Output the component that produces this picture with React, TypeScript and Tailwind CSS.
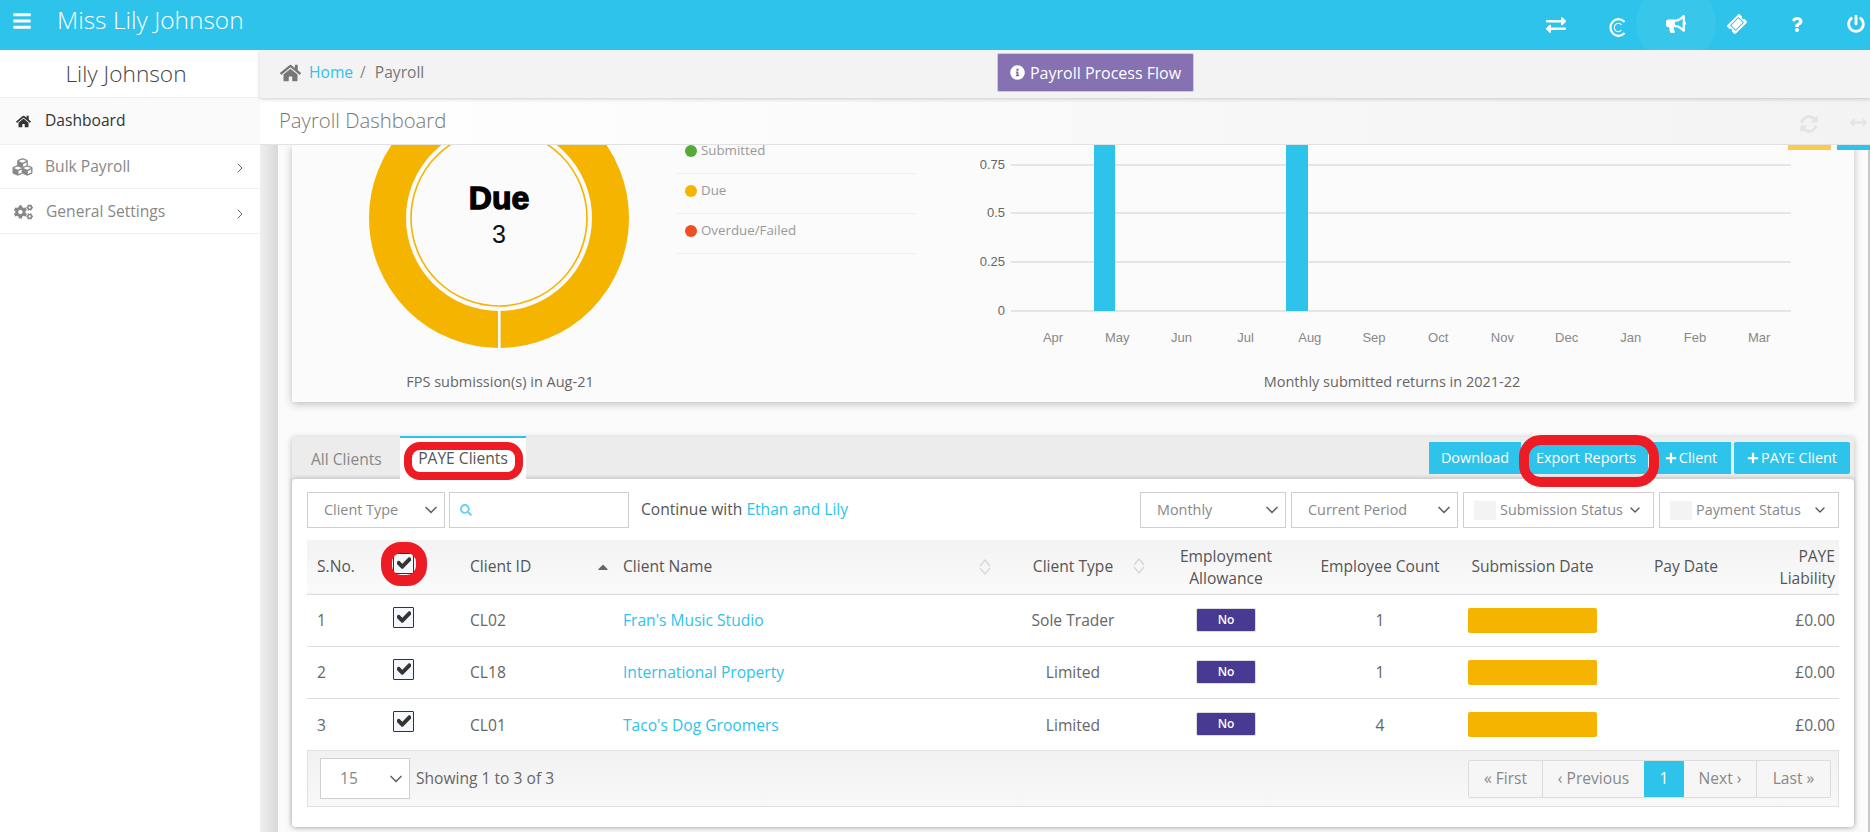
import React from 'react';
import { ChevronDown, ChevronRight } from 'lucide-react';
import {
  FaBars, FaExchangeAlt, FaBullhorn, FaTicketAlt, FaQuestion, FaPowerOff, FaHome, FaCubes, FaCogs,
  FaInfoCircle, FaSyncAlt, FaArrowsAltH, FaSearch, FaPlus, FaCheck, FaCaretUp,
} from 'react-icons/fa';

const months = ['Apr', 'May', 'Jun', 'Jul', 'Aug', 'Sep', 'Oct', 'Nov', 'Dec', 'Jan', 'Feb', 'Mar'];

const clients = [
  { no: 1, id: 'CL02', name: "Fran's Music Studio", type: 'Sole Trader', count: 1 },
  { no: 2, id: 'CL18', name: 'International Property', type: 'Limited', count: 1 },
  { no: 3, id: 'CL01', name: "Taco's Dog Groomers", type: 'Limited', count: 4 },
];

const legend = [
  { label: 'Submitted', color: 'bg-[#56aa3c]', row: 'h-[29px]' },
  { label: 'Due', color: 'bg-[#f5b400]', row: 'h-[40px] pt-[11px]' },
  { label: 'Overdue/Failed', color: 'bg-[#f04e23]', row: 'h-[40px] pt-[11px]' },
];

const CopyIcon = () => (
  <svg width="18" height="19" viewBox="0 0 18 19" fill="none" stroke="white">
    <path d="M16.5 4A8 8.4 0 1 0 16.5 15" strokeWidth="2.2" />
    <path d="M13.5 7A4 4.2 0 1 0 13.5 12" strokeWidth="1.1" />
  </svg>
);

const SortArrows = () => (
  <svg width="12" height="16" viewBox="0 0 12 16" fill="none" stroke="#d5d5d5" strokeWidth="1.2">
    <polyline points="1,7 6,1 11,7" />
    <polyline points="1,9 6,15 11,9" />
  </svg>
);

const Checkbox = () => (
  <span className="flex h-[21px] w-[21px] -translate-y-[3px] items-start justify-center rounded-[1px] border border-[#333] bg-[#f4f7fb] pt-[2px] text-[14px] text-[#333]">
    <FaCheck className="[stroke-width:40px]" />
  </span>
);

const Select = ({ label, className }: { label: string; className: string }) => (
  <div className={`flex h-9 items-center justify-between border border-[#cfcfcf] bg-white pl-[16px] pr-[3px] text-[14.4px] text-[#888] ${className}`}>
    <span>{label}</span>
    <ChevronDown size={20} className="text-[#666]" />
  </div>
);

const MultiSelect = ({ label, className }: { label: string; className: string }) => (
  <div className={`flex h-9 items-center border border-[#cfcfcf] bg-white pl-[10px] pr-[10px] text-[14.4px] text-[#888] ${className}`}>
    <span className="mr-[4px] h-[19px] w-[22px] bg-[#f3f3f3]" />
    <span className="flex-1 whitespace-nowrap">{label}</span>
    <ChevronDown size={16} className="text-[#555]" />
  </div>
);

const Donut = () => (
  <svg className="absolute left-[61.5px] top-[-72px]" width="290" height="290" viewBox="0 0 290 290">
    <circle cx="145" cy="145" r="111.5" fill="none" stroke="#f5b400" strokeWidth="37" />
    <circle cx="145" cy="145" r="88" fill="#fbfbfb" stroke="#f5b400" strokeWidth="1.6" />
    <rect x="144" y="236" width="2.6" height="42" fill="#fbfbfb" />
    <text x="145" y="136" textAnchor="middle" fontFamily="'Liberation Sans', sans-serif" fontWeight="700" fontSize="32" stroke="black" strokeWidth="1.3" fill="black">Due</text>
    <text x="145" y="170" textAnchor="middle" fontFamily="'Liberation Sans', sans-serif" fontSize="25" fill="#111">3</text>
  </svg>
);

const MonthChart = () => {
  const ticks = [
    { label: '0.75', y: 20 },
    { label: '0.5', y: 68 },
    { label: '0.25', y: 117 },
    { label: '0', y: 166 },
  ];
  return (
    <svg className="absolute left-[400px] top-0" width="1140" height="210" viewBox="0 0 1140 210">
      {ticks.map((t) => (
        <g key={t.label}>
          <line x1="319" x2="1099" y1={t.y} y2={t.y} stroke="#cfcfcf" />
          <text x="313" y={t.y + 4} textAnchor="end" fontFamily="'Liberation Sans', sans-serif" fontSize="13" fill="#666">{t.label}</text>
        </g>
      ))}
      <rect x="402" y="0" width="21" height="166" fill="#2dc3ea" />
      <rect x="594" y="0" width="22" height="166" fill="#2dc3ea" />
      {months.map((m, i) => (
        <text key={m} x={361 + i * 64.2} y="197" textAnchor="middle" fontFamily="'Liberation Sans', sans-serif" fontSize="13" fill="#888">{m}</text>
      ))}
    </svg>
  );
};

export default function App() {
  return (
    <div className="flex h-[832px] w-[1870px] flex-col overflow-hidden bg-white font-['Open_Sans',sans-serif] text-[15.6px] text-[#555]">
      <header className="relative z-30 flex h-[50px] shrink-0 items-center bg-[#2dc3ea] text-white">
        <FaBars className="ml-[12px] -mt-[8px] h-[20px] w-[20px]" />
        <span className="ml-[25px] -mt-[10px] text-[24.5px] font-light">Miss Lily Johnson</span>
        <FaExchangeAlt className="absolute left-[1546px] top-[15px] h-[20px] w-[20px]" />
        <span className="absolute left-[1608px] top-[18px]"><CopyIcon /></span>
        <span className="absolute left-[1636px] top-[-17px] h-[80px] w-[80px] rounded-full bg-white/[0.06]" />
        <FaBullhorn className="absolute left-[1666px] top-[14px] h-[20px] w-[20px]" />
        <FaTicketAlt className="absolute left-[1728px] top-[15px] h-[18px] w-[18px] -rotate-45" />
        <FaQuestion className="absolute left-[1791px] top-[17px] h-[15px] w-[12px]" />
        <FaPowerOff className="absolute left-[1847px] top-[15px] h-[18px] w-[18px]" />
      </header>
      <div className="flex min-h-0 flex-1">
        <aside className="flex w-[260px] shrink-0 flex-col bg-white">
          <div className="flex h-[48px] items-center justify-center border-b border-[#f0f0f0] pr-[8px] pt-[2px] text-[22.7px] font-light text-[#444]">Lily Johnson</div>
          <div className="flex h-[47px] items-center border-b border-[#f0f0f0] bg-[#fafafa] pl-[16px] text-[#333]">
            <FaHome className="mr-[14px] h-[15px] w-[15px]" />
            <span>Dashboard</span>
          </div>
          <div className="flex h-[44px] items-center border-b border-[#f0f0f0] pl-[12px] pr-[12px] text-[#888]">
            <FaCubes className="mr-[12px] h-[20px] w-[21px]" />
            <span>Bulk Payroll</span>
            <ChevronRight size={16} strokeWidth={1.5} className="ml-auto mt-[3px] text-[#666]" />
          </div>
          <div className="flex h-[45px] items-center border-b border-[#f0f0f0] pl-[14px] pr-[12px] pt-[2px] text-[#888]">
            <FaCogs className="mr-[13px] h-[18px] w-[19px]" />
            <span>General Settings</span>
            <ChevronRight size={16} strokeWidth={1.5} className="ml-auto mt-[3px] text-[#666]" />
          </div>
        </aside>
        <main className="flex min-w-0 flex-1 flex-col bg-[#f4f4f4]">
          <div className="relative z-20 flex h-[48px] shrink-0 items-center bg-[#f3f3f3] pb-[2px] pl-[20px] shadow-[0_1px_4px_rgba(0,0,0,0.2)]">
            <FaHome className="h-[20px] w-[21px] text-[#777]" />
            <a className="ml-[8px] text-[#2dc3ea]">Home</a>
            <span className="ml-[7px] text-[#888]">/</span>
            <span className="ml-[9px] text-[#777]">Payroll</span>
            <button className="absolute left-[737px] top-[3px] flex h-[39px] w-[197px] items-center justify-center gap-[5px] rounded-[2px] border border-[#cfc8e0] bg-[#8672b3] text-[16px] text-white">
              <FaInfoCircle className="h-[15px] w-[15px]" />
              Payroll Process Flow
            </button>
          </div>
          <div className="relative z-10 flex h-[47px] shrink-0 items-center border-b border-[#e2e2e2] bg-gradient-to-r from-white to-[#f3f3f3] pb-[2px] pl-[19px] text-[20.3px] font-light text-[#777]">
            Payroll Dashboard
            <FaSyncAlt className="absolute left-[1540px] top-[17px] h-[18px] w-[18px] text-[#e3e3e3]" />
            <FaArrowsAltH className="absolute left-[1588px] top-[16px] h-[17px] w-[21px] text-[#e3e3e3]" />
          </div>
          <div className="relative flex min-h-0 flex-1 overflow-hidden bg-[#c8c8c8]">
            <div className="absolute left-[1528px] top-0 z-10 h-[5px] w-[43px] bg-[#fdc94e]" />
            <div className="absolute left-[1577px] top-0 z-10 h-[5px] w-[33px] bg-[#2dc3ea]" />
            <div className="h-full w-[18px] shrink-0 bg-gradient-to-r from-[#efefef] to-[#d9d9d9]" />
            <div className="flex h-full w-[1590px] shrink-0 flex-col bg-[#fbfbfb] pl-[14px]">
              <div className="relative h-[257px] w-[1562px] shrink-0 overflow-hidden bg-[#fbfbfb] shadow-[0_2px_8px_rgba(0,0,0,0.25)]">
                <Donut />
                <div className="absolute left-[385px] top-0 w-[239px] text-[13.3px] text-[#999]">
                  {legend.map((row) => (
                    <div key={row.label} className={`flex items-start border-b border-[#efefef] pl-[8px] ${row.row}`}>
                      <span className={`mr-[4px] h-[12px] w-[12px] rounded-full ${row.color}`} />
                      <span className="-mt-[1px] leading-[12px]">{row.label}</span>
                    </div>
                  ))}
                </div>
                <MonthChart />
                <p className="absolute bottom-[9px] left-[0px] w-[416px] text-center text-[14.5px] text-[#666]">FPS submission(s) in Aug-21</p>
                <p className="absolute bottom-[9px] left-[900px] w-[400px] text-center text-[14.5px] text-[#666]">Monthly submitted returns in 2021-22</p>
              </div>
              <div className="relative mt-[35px] h-[390px] w-[1562px] shrink-0 rounded-[3px] bg-[#ececec] shadow-[0_1px_6px_rgba(0,0,0,0.25)]">
                <div className="flex h-[42px] items-end">
                  <span className="flex h-[40px] w-[107px] items-center pl-[19px] pt-[1px] text-[#888]">All Clients</span>
                  <span className="ml-[1px] flex h-[43px] w-[126px] items-center justify-center border-t-2 border-[#2dc3ea] bg-white pt-[1px] text-[#555]">PAYE Clients</span>
                  <div className="absolute right-[4px] top-[5px] flex gap-[3px] text-[14.4px] text-white">
                    <button className="h-[32px] w-[92px] bg-[#2dc3ea]">Download</button>
                    <button className="h-[32px] w-[124px] bg-[#2dc3ea]">Export Reports</button>
                    <button className="flex h-[32px] w-[80px] items-center justify-center gap-[2px] bg-[#2dc3ea]"><FaPlus className="h-[12px] w-[12px]" />Client</button>
                    <button className="flex h-[32px] w-[116px] items-center justify-center gap-[2px] rounded-[2px] bg-[#2dc3ea]"><FaPlus className="h-[12px] w-[12px]" />PAYE Client</button>
                  </div>
                </div>
                <div className="h-[348px] rounded-[4px] bg-white px-[15px] pt-[13px] shadow-[0_-1px_4px_rgba(0,0,0,0.2)]">
                  <div className="flex h-9 items-center">
                    <Select label="Client Type" className="w-[138px]" />
                    <div className="ml-[4px] flex h-9 w-[180px] items-center border border-[#cfcfcf] pl-[10px] text-[#68d3ef]"><FaSearch className="h-[12px] w-[12px]" /></div>
                    <span className="ml-[12px] whitespace-nowrap">Continue with <a className="text-[#2dc3ea]">Ethan and Lily</a></span>
                    <Select label="Monthly" className="ml-auto w-[146px]" />
                    <Select label="Current Period" className="ml-[5px] w-[167px]" />
                    <MultiSelect label="Submission Status" className="ml-[5px] w-[191px]" />
                    <MultiSelect label="Payment Status" className="ml-[5px] w-[180px]" />
                  </div>
                  <table className="mt-[12px] w-[1532px] table-fixed border-collapse">
                    <colgroup>
                      <col className="w-[76px]" /><col className="w-[77px]" /><col className="w-[153px]" /><col className="w-[383px]" /><col className="w-[154px]" />
                      <col className="w-[152px]" /><col className="w-[156px]" /><col className="w-[149px]" /><col className="w-[158px]" /><col className="w-[74px]" />
                    </colgroup>
                    <thead>
                      <tr className="h-[54px] border-b border-[#ddd] bg-gradient-to-b from-[#f3f3f3] to-[#fafafa] text-[#555]">
                        <th className="pl-[10px] text-left font-medium">S.No.</th>
                        <th className="pl-[10px] text-left"><Checkbox /></th>
                        <th className="pl-[10px] text-left font-medium">
                          <div className="flex items-center justify-between pr-[2px]">Client ID <FaCaretUp className="h-[16px] w-[16px] text-[#666]" /></div>
                        </th>
                        <th className="pl-[10px] text-left font-medium">
                          <div className="flex items-center justify-between pr-[5px]">Client Name <SortArrows /></div>
                        </th>
                        <th className="font-medium">
                          <div className="relative text-center">Client Type <span className="absolute right-[5px] top-[3px]"><SortArrows /></span></div>
                        </th>
                        <th className="font-medium leading-[22px]">Employment<br />Allowance</th>
                        <th className="font-medium">Employee Count</th>
                        <th className="font-medium">Submission Date</th>
                        <th className="font-medium">Pay Date</th>
                        <th className="pr-[4px] text-right font-medium leading-[22px]">PAYE<br />Liability</th>
                      </tr>
                    </thead>
                    <tbody>
                      {clients.map((c) => (
                        <tr key={c.id} className="h-[52px] border-b border-[#ddd] text-[#666] last:border-b-0">
                          <td className="pl-[10px] pt-[2px]">{c.no}</td>
                          <td className="pl-[10px]"><Checkbox /></td>
                          <td className="pl-[10px] pt-[2px]">{c.id}</td>
                          <td className="pl-[10px] pt-[2px] text-[#2dc3ea]">{c.name}</td>
                          <td className="pt-[2px] text-center">{c.type}</td>
                          <td><span className="mx-auto flex h-[24px] w-[60px] items-center justify-center rounded-[2px] border border-[#ddd] bg-[#483a92] text-[12px] font-semibold text-white">No</span></td>
                          <td className="pt-[2px] text-center">{c.count}</td>
                          <td><span className="mx-auto block h-[25px] w-[129px] rounded-[2px] bg-[#f5b400]" /></td>
                          <td></td>
                          <td className="pr-[4px] pt-[2px] text-right">£0.00</td>
                        </tr>
                      ))}
                    </tbody>
                  </table>
                  <div className="flex h-[57px] items-center border border-[#e0e0e0] bg-gradient-to-b from-[#f1f1f1] to-[#f8f8f8] pl-[12px] pr-[7px] text-[#666]">
                    <div className="flex h-[41px] w-[90px] items-center justify-between border border-[#cfcfcf] bg-white pl-[19px] pr-[3px] text-[#888]">15 <ChevronDown size={20} className="text-[#666]" /></div>
                    <span className="ml-[6px]">Showing 1 to 3 of 3</span>
                    <div className="ml-auto flex h-[38px] rounded-[2px] border border-[#dcdcdc] bg-[#f6f6f6] text-[#888]">
                      <span className="flex w-[74px] items-center justify-center border-r border-[#dcdcdc]">« First</span>
                      <span className="flex w-[101px] items-center justify-center">‹ Previous</span>
                      <span className="flex w-[40px] items-center justify-center bg-[#2dc3ea] text-white">1</span>
                      <span className="flex w-[73px] items-center justify-center border-r border-[#dcdcdc]">Next ›</span>
                      <span className="flex w-[73px] items-center justify-center">Last »</span>
                    </div>
                  </div>
                </div>
                {/* red annotations drawn on the screenshot */}
                <span className="absolute left-[112px] top-[5px] h-[38px] w-[119px] rounded-[16px] border-[8px] border-[#ed1c24]" />
                <span className="absolute left-[1227px] top-[-2px] h-[52px] w-[140px] rounded-[22px] border-[10px] border-[#ed1c24]" />
                <span className="absolute left-[89px] top-[105px] h-[44px] w-[46px] rounded-[20px] border-[11px] border-[#ed1c24]" />
              </div>
            </div>
          </div>
        </main>
      </div>
    </div>
  );
}
